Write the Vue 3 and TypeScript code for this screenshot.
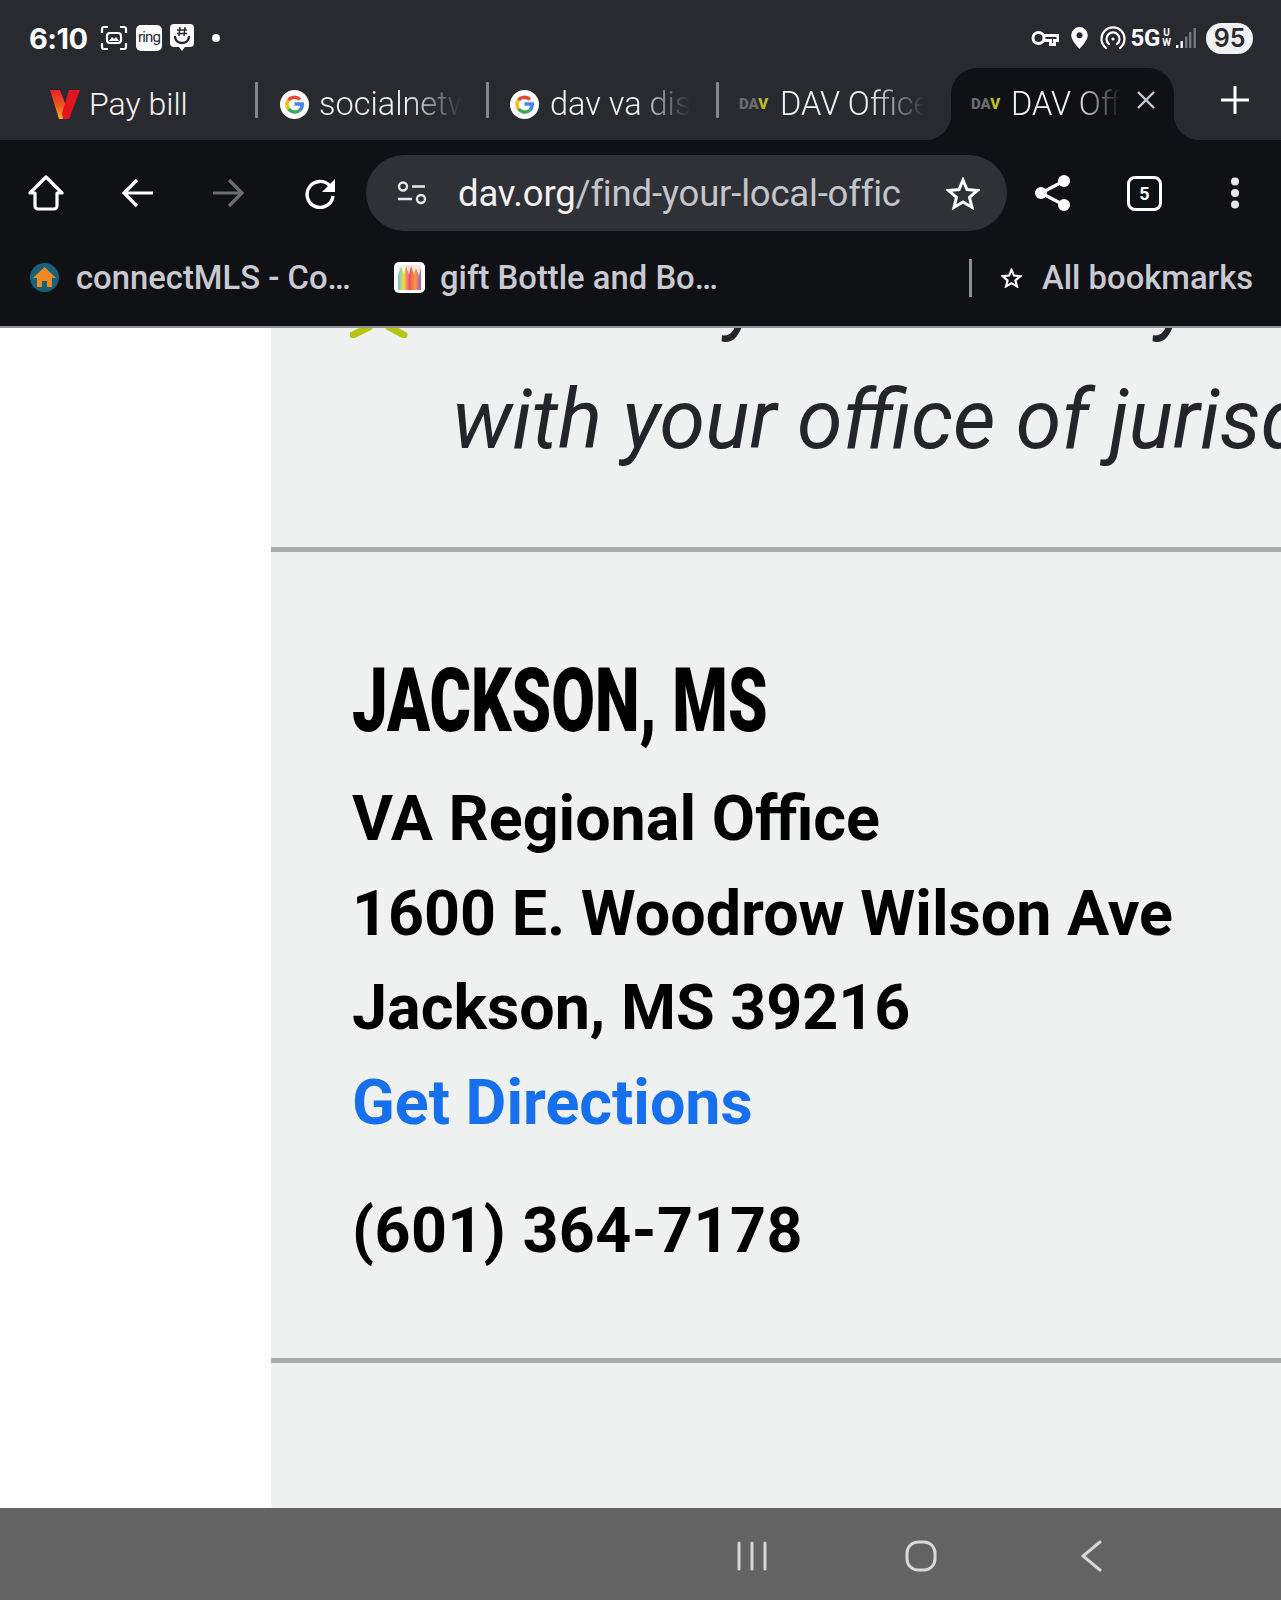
<script setup lang="ts">
interface Tab { title: string; icon: 'v' | 'g' | 'dav'; cls: string }
const tabs: Tab[] = [
  { title: 'Pay bill', icon: 'v', cls: 't1' },
  { title: 'socialnetwork', icon: 'g', cls: 't2' },
  { title: 'dav va disability', icon: 'g', cls: 't3' },
  { title: 'DAV Office', icon: 'dav', cls: 't4' },
]
const lines = ['VA Regional Office', '1600 E. Woodrow Wilson Ave', 'Jackson, MS 39216']
</script>

<template>
  <div class="screen">
    <header class="status">
      <span class="time">6:10</span>
      <svg class="ic shot" width="28" height="26" viewBox="0 0 28 26" fill="none" stroke="#fff" stroke-width="2.2">
        <path d="M2 8V4a2 2 0 0 1 2-2h4M20 2h4a2 2 0 0 1 2 2v4M2 18v4a2 2 0 0 0 2 2h4M20 24h4a2 2 0 0 0 2-2v-4" />
        <rect x="7" y="8" width="14" height="10" rx="3" />
        <path d="M9 16l3-4 2 2 2-2 3 4z" fill="#fff" stroke="none" />
      </svg>
      <span class="ring">ring</span>
      <svg class="ic gm" width="26" height="30" viewBox="0 0 26 30">
        <path d="M5 1h16a4 4 0 0 1 4 4v15a4 4 0 0 1-4 4h-5l-3 4-3-4H5a4 4 0 0 1-4-4V5a4 4 0 0 1 4-4z" fill="#fff" />
        <path d="M6 14c1 8 13 8 14 0" fill="none" stroke="#292a2f" stroke-width="2.4" stroke-linecap="round" />
        <path d="M11 4l-1 9M16 4l-1 9M8 7h10M8 10.500h10" fill="none" stroke="#292a2f" stroke-width="1.500" />
      </svg>
      <span class="dot"></span>
      <span class="grow"></span>
      <svg class="ic" width="28" height="18" viewBox="0 0 28 18" fill="none" stroke="#fff" stroke-width="3">
        <circle cx="7.500" cy="9" r="5.500" />
        <path d="M13 6.500h14v5h-3.500v4h-4v-4H13" />
      </svg>
      <svg class="ic pin" width="17" height="22" viewBox="0 0 17 22">
        <path fill-rule="evenodd" d="M8.500 0a8.300 8.300 0 0 1 8.300 8.300C16.800 14 8.500 22 8.500 22S.2 14 .2 8.300A8.300 8.300 0 0 1 8.500 0zm0 5.300a3 3 0 1 0 0 6 3 3 0 0 0 0-6z" fill="#fff" />
      </svg>
      <svg class="ic hot" width="26" height="24" viewBox="0 0 26 24" fill="none" stroke="#fff" stroke-width="2.200" stroke-linecap="round">
        <path d="M6 22A11.500 11.500 0 1 1 20 22" />
        <path d="M9 18a6.500 6.500 0 1 1 8 0" />
        <circle cx="13" cy="13" r="1.600" fill="#fff" stroke="none" />
      </svg>
      <span class="net">5G</span>
      <span class="uw"><span>U</span><span>W</span></span>
      <svg class="ic sig" width="20" height="22" viewBox="0 0 20 22">
        <rect x="0" y="18" width="2.400" height="3" fill="#fff" />
        <rect x="4.500" y="14" width="2.400" height="7" fill="#fff" />
        <rect x="9" y="9.500" width="2.400" height="11.500" fill="#77787c" />
        <rect x="13" y="5" width="2.400" height="16" fill="#77787c" />
        <rect x="17.500" y="1" width="2.400" height="20" fill="#77787c" />
      </svg>
      <span class="battery">95</span>
    </header>

    <nav class="tabs">
      <template v-for="t in tabs" :key="t.cls">
        <div class="tab" :class="t.cls">
          <svg v-if="t.icon === 'v'" width="32" height="32" viewBox="0 0 32 32">
            <defs>
              <linearGradient id="vg" x1="0" y1="0" x2="0" y2="1">
                <stop offset="0" stop-color="#e8222a" />
                <stop offset="0.550" stop-color="#ee5b20" />
                <stop offset="1" stop-color="#f6b42a" />
              </linearGradient>
            </defs>
            <path d="M1 2h10l6 16-1 13h-6z" fill="url(#vg)" />
            <path d="M20 2h11L20 31h-6l-1-6z" fill="#e5141f" />
          </svg>
          <svg v-else-if="t.icon === 'g'" width="29" height="29" viewBox="0 0 29 29" fill="none">
            <circle cx="14.500" cy="14.500" r="14.500" fill="#fff" />
            <path d="M20 9.500a8 8 0 0 0-11.500.500" stroke="#ea4335" stroke-width="3.400" />
            <path d="M8.500 10a8 8 0 0 0 0 9" stroke="#fbbc05" stroke-width="3.400" />
            <path d="M8.500 19a8 8 0 0 0 11 1.500" stroke="#34a853" stroke-width="3.400" />
            <path d="M19.500 20.500a8 8 0 0 0 2.800-6.500H14.500" stroke="#4285f4" stroke-width="3.400" />
          </svg>
          <span v-else class="dav"><span>DA</span><b>V</b></span>
          <span class="title">{{ t.title }}</span>
        </div>
        <span class="sep" :class="{ hidden: t.cls === 't4' }"></span>
      </template>
      <div class="tab active">
        <span class="dav"><span>DA</span><b>V</b></span>
        <span class="title">DAV Office</span>
        <svg class="close" width="20" height="20" viewBox="0 0 20 20" stroke="#c9cacf" stroke-width="2.400">
          <path d="M2 2l16 16M18 2L2 18" />
        </svg>
      </div>
      <svg class="plus" width="28" height="28" viewBox="0 0 28 28" stroke="#fff" stroke-width="3">
        <path d="M14 0v28M0 14h28" />
      </svg>
    </nav>

    <div class="toolbar">
      <svg class="home" width="36" height="36" viewBox="0 0 36 36" fill="none" stroke="#fff" stroke-width="3.200" stroke-linejoin="round">
        <path d="M2 18L18 2l16 16h-5v13a3 3 0 0 1-3 3H10a3 3 0 0 1-3-3V18z" />
      </svg>
      <svg class="back" width="32" height="30" viewBox="0 0 32 30" fill="none" stroke="#fff" stroke-width="3.200">
        <path d="M32 15H3M16 2L3 15l13 13" />
      </svg>
      <svg class="fwd" width="32" height="30" viewBox="0 0 32 30" fill="none" stroke="#6d6e72" stroke-width="3.200">
        <path d="M0 15h29M16 2l13 13-13 13" />
      </svg>
      <svg class="reload" width="32" height="32" viewBox="0 0 32 32" fill="none">
        <path d="M26 9a13 13 0 1 0 3 10" stroke="#fff" stroke-width="3.400" />
        <path d="M31 2v13H18z" fill="#fff" />
      </svg>
      <div class="pill">
        <svg class="tune" width="31" height="24" viewBox="0 0 31 24" fill="none" stroke="#e8e8ec" stroke-width="2.400">
          <circle cx="6" cy="5.500" r="4" />
          <path d="M15 5.500h13M1 18h14" />
          <circle cx="24" cy="18" r="4" />
        </svg>
        <span class="url"><span class="dom">dav.org</span>/find-your-local-office</span>
        <svg class="star" width="34" height="33" viewBox="0 0 34 33" fill="none" stroke="#fff" stroke-width="3" stroke-linejoin="miter">
          <path d="M17 3l4 9.500 10.500 1-8 6.800 2.500 10L17 25l-9 5.300 2.500-10-8-6.800 10.500-1z" />
        </svg>
      </div>
      <svg class="share" width="38" height="38" viewBox="0 0 38 38" fill="#fff" stroke="#fff" stroke-width="3.200">
        <path d="M30 7L7 19l23 12" fill="none" />
        <circle cx="30" cy="7" r="6" stroke="none" />
        <circle cx="7" cy="19" r="6" stroke="none" />
        <circle cx="30" cy="31" r="6" stroke="none" />
      </svg>
      <span class="count">5</span>
      <svg class="more" width="10" height="32" viewBox="0 0 10 32" fill="#e8e8ec">
        <circle cx="5" cy="4.500" r="4" />
        <circle cx="5" cy="16" r="4" />
        <circle cx="5" cy="27.500" r="4" />
      </svg>
    </div>

    <div class="bookmarks">
      <svg width="29" height="29" viewBox="0 0 29 29">
        <circle cx="14.500" cy="14.500" r="14.500" fill="#17617a" />
        <path d="M14.500 4L3 15h4v9h5v-6h5v6h5v-9h4z" fill="#f08a24" />
      </svg>
      <span class="bm b1">connectMLS - Co…</span>
      <svg class="gift" width="31" height="31" viewBox="0 0 31 31">
        <defs>
          <linearGradient id="g2" x1="0" y1="0" x2="1" y2="0">
            <stop offset="0" stop-color="#5ec8ea" />
            <stop offset="0.250" stop-color="#f2dc3c" />
            <stop offset="0.500" stop-color="#ef4b6c" />
            <stop offset="0.750" stop-color="#f3a131" />
            <stop offset="1" stop-color="#a455c6" />
          </linearGradient>
        </defs>
        <rect width="31" height="31" rx="5" fill="#fff" />
        <rect x="4" y="3" width="23" height="25" fill="url(#g2)" />
        <path d="M4 3h23v3l-2 8-3-8-2 6-3-8-2 9-3-9-2 8-3-7-3 8z" fill="#fff" opacity="0.800" />
      </svg>
      <span class="bm b2">gift Bottle and Bo…</span>
      <span class="bsep"></span>
      <svg class="bstar" width="21" height="20" viewBox="0 0 34 33" fill="none" stroke="#fff" stroke-width="3.600">
        <path d="M17 3l4 9.500 10.500 1-8 6.800 2.500 10L17 25l-9 5.300 2.500-10-8-6.800 10.500-1z" />
      </svg>
      <span class="bm b3">All bookmarks</span>
    </div>

    <main class="page">
      <aside class="side"></aside>
      <section class="panel">
        <div class="intro">
          <svg class="bow" width="58" height="10" viewBox="0 0 58 10" fill="none" stroke="#b9c40f" stroke-width="7" stroke-linecap="round">
            <path d="M3 7l16-8M39 -1l15 8" />
          </svg>
          <p>Submit your claims yourself directly</p>
          <p>with your office of jurisdiction</p>
        </div>
        <div class="office">
          <h2>JACKSON, MS</h2>
          <div v-for="l in lines" :key="l" class="line">{{ l }}</div>
          <div class="line link">Get Directions</div>
          <div class="line phone">(601) 364-7178</div>
        </div>
        <div class="rest"></div>
      </section>
    </main>

    <footer class="navbar">
      <svg class="recent" width="30" height="30" viewBox="0 0 30 30" stroke="#d8d8d8" stroke-width="3" stroke-linecap="round">
        <path d="M2 2v26M15 2v26M28 2v26" />
      </svg>
      <svg class="hm" width="32" height="32" viewBox="0 0 32 32" fill="none" stroke="#d8d8d8" stroke-width="3">
        <rect x="2" y="2" width="28" height="28" rx="11" />
      </svg>
      <svg class="bk" width="21" height="32" viewBox="0 0 21 32" fill="none" stroke="#d8d8d8" stroke-width="3" stroke-linecap="round">
        <path d="M19 2L2 16l17 14" />
      </svg>
    </footer>
  </div>
</template>

<style scoped>
.screen {
  width: 1281px;
  height: 1600px;
  display: flex;
  flex-direction: column;
  overflow: hidden;
  font-family: Roboto, "Liberation Sans", sans-serif;
  background: #fff;
}
.status {
  flex: none;
  height: 68px;
  background: #292a2f;
  display: flex;
  align-items: center;
  padding: 8px 28px 0 29px;
  box-sizing: border-box;
  color: #fff;
}
.ic { flex: none; display: block; }
.time { font-weight: 700; font-size: 29px; width: 71px; font-family: Inter, Roboto, sans-serif; letter-spacing: -0.5px; }
.ring {
  margin-left: 8px;
  width: 26px;
  height: 26px;
  background: #fff;
  border-radius: 5px;
  color: #292a2f;
  font-size: 15px;
  line-height: 25px;
  text-align: center;
  letter-spacing: -0.8px;
}
.gm { margin-left: 7px; }
.dot { width: 8px; height: 8px; border-radius: 50%; background: #fff; margin-left: 17px; }
.grow { flex: 1; }
.pin { margin-left: 12px; }
.hot { margin-left: 12px; }
.net { font-size: 24px; font-weight: 700; margin-left: 4px; letter-spacing: -0.3px; }
.uw { display: flex; flex-direction: column; font-size: 10px; font-weight: 700; line-height: 10px; margin-left: 1px; width: 11px; text-align: center; }
.sig { margin-left: 4px; }
.battery {
  margin-left: 10px;
  width: 47px;
  height: 31px;
  border-radius: 16px;
  background: #f1f1f3;
  color: #292a2f;
  font-family: Inter, Roboto, sans-serif;
  font-weight: 600;
  font-size: 25px;
  line-height: 31px;
  text-align: center;
}
.tabs {
  flex: none;
  height: 72px;
  background: #292a2f;
  display: flex;
  align-items: stretch;
  padding-left: 49px;
  color: #f2f2f4;
}
.tab { display: flex; align-items: center; flex: none; box-sizing: border-box; height: 72px; position: relative; }
.t1 { width: 206px; gap: 8px; }
.t2 { width: 228px; padding-left: 22px; gap: 10px; }
.t3 { width: 227px; padding-left: 21px; gap: 11px; }
.t4 { width: 232px; padding-left: 20px; gap: 11px; }
.title { font-size: 32.500px; font-weight: 350; white-space: nowrap; overflow: hidden; }
.t1 .title { width: 110px; font-size: 32px; }
.t2 .title { width: 143px; -webkit-mask-image: linear-gradient(to right, #000 62%, transparent); mask-image: linear-gradient(to right, #000 62%, transparent); }
.t3 .title { width: 140px; -webkit-mask-image: linear-gradient(to right, #000 62%, transparent); mask-image: linear-gradient(to right, #000 62%, transparent); }
.t4 .title { width: 145px; -webkit-mask-image: linear-gradient(to right, #000 62%, transparent); mask-image: linear-gradient(to right, #000 62%, transparent); }
.sep { flex: none; width: 3px; height: 36px; margin-top: 14px; background: #86878c; border-radius: 1px; }
.sep.hidden { width: 0; }
.dav { flex: none; width: 30px; font-size: 15px; font-weight: 900; color: #6a6b6e; letter-spacing: 0; white-space: nowrap; }
.dav b { color: #b4bf22; font-weight: 900; }
.active {
  width: 223px;
  background: #101115;
  border-radius: 26px 26px 0 0;
  padding-left: 20px;
  gap: 10px;
}
.active::before, .active::after {
  content: "";
  position: absolute;
  bottom: 0;
  width: 26px;
  height: 26px;
}
.active::before { left: -26px; background: radial-gradient(circle at 0 0, transparent 26px, #101115 26.500px); }
.active::after { right: -26px; background: radial-gradient(circle at 100% 0, transparent 26px, #101115 26.500px); }
.active .title { width: 110px; -webkit-mask-image: linear-gradient(to right, #000 60%, transparent); mask-image: linear-gradient(to right, #000 60%, transparent); }
.close { flex: none; margin: -8px 0 0 5px; }
.plus { flex: none; margin: 18px 0 0 47px; }
.toolbar {
  flex: none;
  height: 94px;
  box-sizing: border-box;
  padding: 12px 0 0 28px;
  background: #101115;
  display: flex;
  align-items: center;
}
.toolbar > svg { flex: none; }
.back { margin-left: 57px; }
.fwd { margin-left: 60px; }
.reload { margin-left: 59px; }
.pill {
  margin-left: 30px;
  width: 641px;
  height: 76px;
  flex: none;
  border-radius: 38px;
  background: #303136;
  display: flex;
  align-items: center;
  padding-left: 31px;
  box-sizing: border-box;
}
.tune { flex: none; }
.url {
  margin-left: 30px;
  width: 444px;
  font-size: 36.500px;
  color: #c4c5ca;
  white-space: nowrap;
  overflow: hidden;
  letter-spacing: -0.2px;
}
.dom { color: #f2f2f4; }
.star { flex: none; margin-left: 44px; }
.share { margin-left: 27px; }
.count {
  flex: none;
  margin-left: 55px;
  width: 35px;
  height: 35px;
  box-sizing: border-box;
  border: 3px solid #fff;
  border-radius: 8px;
  color: #fff;
  font-size: 18px;
  font-weight: 700;
  line-height: 29px;
  text-align: center;
}
.more { margin-left: 68px; }
.bookmarks {
  flex: none;
  height: 94px;
  box-sizing: border-box;
  background: #101115;
  border-bottom: 2px solid #8e8f93;
  display: flex;
  align-items: center;
  padding: 0 0 5px 30px;
  color: #c9cad1;
}
.bookmarks > svg { flex: none; }
.bm { font-size: 32.800px; font-weight: 500; white-space: nowrap; }
.b1 { margin-left: 17px; width: 278px; }
.gift { margin-left: 40px; }
.b2 { margin-left: 15px; width: 279px; }
.bsep { flex: none; width: 3px; height: 38px; background: #8e8f93; margin-left: 250px; }
.bstar { margin-left: 29px; }
.b3 { margin-left: 20px; }
.page { flex: 1; display: flex; min-height: 0; }
.side { width: 271px; flex: none; background: #fff; }
.panel { flex: 1; background: #eff0f0; display: flex; flex-direction: column; min-width: 0; overflow: hidden; }
.intro {
  flex: none;
  height: 219px;
  box-sizing: border-box;
  padding-left: 181px;
  position: relative;
  overflow: hidden;
}
.intro p {
  margin: 0;
  font-size: 82.600px;
  font-style: italic;
  line-height: 124px;
  color: #242529;
  white-space: nowrap;
  position: relative;
  top: -94px;
}
.bow { position: absolute; left: 79px; top: 0; }
.office {
  flex: none;
  height: 816px;
  box-sizing: border-box;
  border-top: 5px solid #aaabab;
  border-bottom: 5px solid #aaabab;
  padding: 96px 0 0 81px;
  color: #000;
}
h2 {
  margin: 0 0 18px;
  font-size: 89px;
  line-height: 106px;
  font-weight: 900;
  transform: scaleX(0.712);
  transform-origin: left center;
  white-space: nowrap;
}
.line { font-size: 62.800px; line-height: 94.500px; font-weight: 700; white-space: nowrap; }
.link { color: #1670ee; }
.phone { margin-top: 34px; letter-spacing: 0.45px; }
.rest { flex: 1; }
.navbar {
  flex: none;
  height: 92px;
  background: #636363;
  display: flex;
  align-items: center;
  padding: 4px 0 0 737px;
  box-sizing: border-box;
}
.navbar svg { flex: none; }
.hm { margin-left: 138px; }
.bk { margin-left: 144px; }
</style>
